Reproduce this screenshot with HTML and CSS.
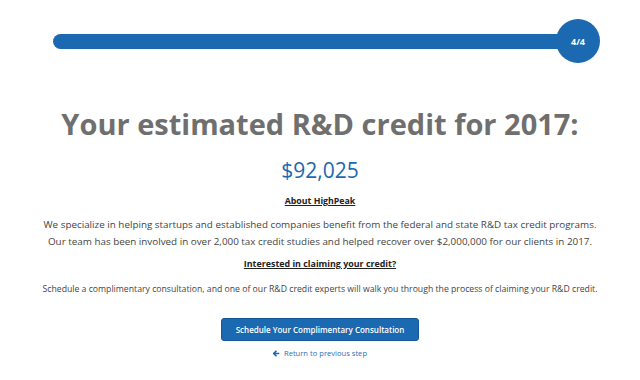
FILE: index.html
```html
<!DOCTYPE html>
<html>
<head>
<meta charset="utf-8">
<link rel="stylesheet" href="styles.css">
</head>
<body>
<div class="page">
  <div class="progress">
    <div class="track"></div>
    <div class="badge">4/4</div>
  </div>
  <h1 class="title">Your estimated R&amp;D credit for 2017:</h1>
  <div class="amount">$92,025</div>
  <div class="label">About HighPeak</div>
  <p class="about">We specialize in helping startups and established companies benefit from the federal and state R&amp;D tax credit programs.<br>Our team has been involved in over 2,000 tax credit studies and helped recover over $2,000,000 for our clients in 2017.</p>
  <div class="label label2">Interested in claiming your credit?</div>
  <p class="cta-text">Schedule a complimentary consultation, and one of our R&amp;D credit experts will walk you through the process of claiming your R&amp;D credit.</p>
  <div class="actions">
    <button class="btn">Schedule Your Complimentary Consultation</button>
    <a class="back" href="#"><svg class="arrow" viewBox="0 0 10 10" width="7" height="7"><path d="M5 1 L1 5 L5 9 M1.5 5 H9" fill="none" stroke="currentColor" stroke-width="2.2"/></svg>Return to previous step</a>
  </div>
</div>
</body>
</html>
```
FILE: styles.css
```css
* { box-sizing: border-box; }
html, body { margin: 0; padding: 0; background: #fff; }
body { font-family: "Open Sans", "Liberation Sans", sans-serif; color: #333; width: 640px; height: 380px; overflow: hidden; }
.page { display: flex; flex-direction: column; align-items: center; }
.progress { position: relative; width: 640px; height: 82px; }
.track { position: absolute; left: 53px; top: 34px; width: 520px; height: 15px; background: #1a69b1; border-radius: 8px; }
.badge { position: absolute; left: 556px; top: 19px; width: 44px; height: 44px; border-radius: 50%; background: #1a69b1; color: #fff; font-size: 9px; font-weight: 700; display: flex; align-items: center; justify-content: center; }
.title { margin: 22px 0 0; font-size: 29px; line-height: 40px; font-weight: 700; color: #6f6f6f; letter-spacing: 0; }
.amount { margin-top: 13px; font-size: 21px; line-height: 26px; color: #1a69b1; }
.label { margin-top: 12px; font-size: 8.8px; line-height: 12px; font-weight: 700; color: #222; text-decoration: underline; }
.about { margin: 9px 0 0; text-align: center; font-size: 9.85px; line-height: 17px; color: #444; }
.label2 { margin-top: 8px; font-size: 8.9px; }
.cta-text { margin: 13px 0 0; text-align: center; font-size: 8.7px; line-height: 12px; color: #444; }
.actions { margin-top: 23px; display: flex; flex-direction: column; align-items: center; }
.btn { width: 198px; height: 23px; border: 1px solid #15589a; border-radius: 3px; background: #1a69b1; color: #fff; font-family: inherit; font-size: 8px; font-weight: 600; padding: 0; cursor: pointer; }
.back { margin-top: 7px; font-size: 7.6px; line-height: 10px; color: #2a72b5; text-decoration: none; display: flex; align-items: center; gap: 4px; }
.arrow { color: #1a69b1; }
```
